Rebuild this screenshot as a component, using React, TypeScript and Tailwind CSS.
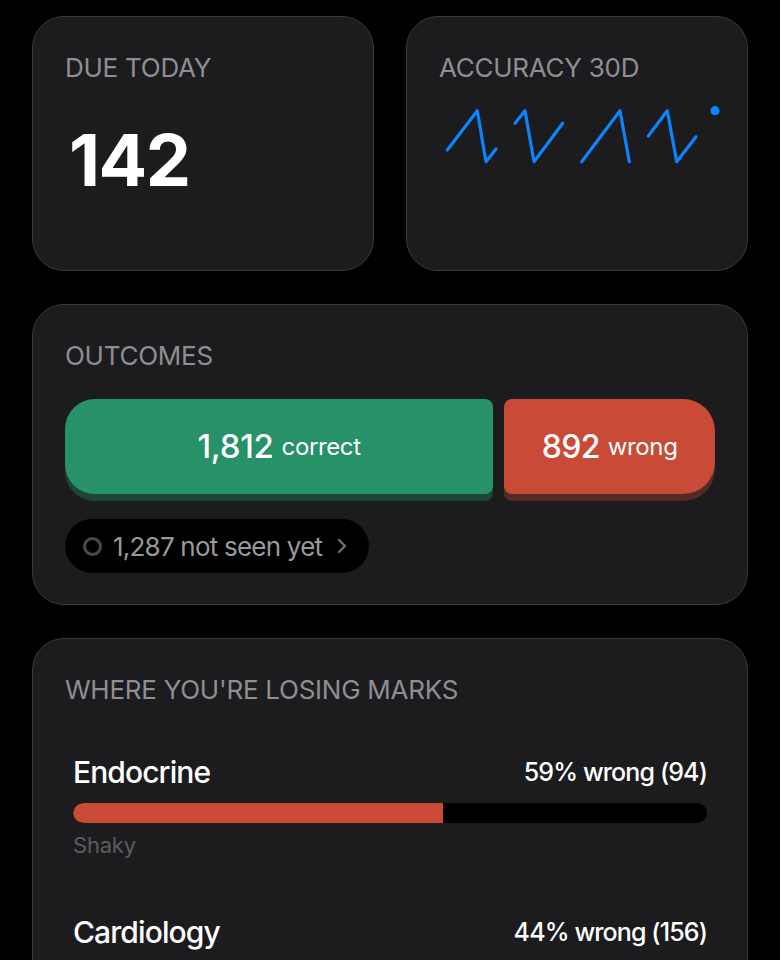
import React from "react";

const font = { fontFamily: "Inter, 'Liberation Sans', sans-serif" };

function Sparkline() {
  return (
    <svg width="282" height="64" viewBox="0 0 282 64" fill="none">
      <g stroke="#0a84ff" strokeWidth="3.2" strokeLinecap="round" strokeLinejoin="round">
        <polyline points="8.3,46 38.3,6.7 47,57.7 57,45" />
        <polyline points="76,19.3 86,6.7 95,57.7 123.7,19.3" />
        <polyline points="142.7,57.7 181,6.7 190.3,57.7" />
        <polyline points="209.3,32 228.3,6.7 237.7,57.7 257,32.7" />
      </g>
      <circle cx="276" cy="6.7" r="4.6" fill="#0a84ff" />
    </svg>
  );
}

function Row({ name, stat, pct, tag }: { name: string; stat: string; pct: number; tag?: string }) {
  return (
    <div className="px-2">
      <div className="flex items-center justify-between">
        <span className="text-[30px] leading-[40px] font-medium text-white tracking-[-0.03em]">{name}</span>
        <span className="text-[25px] leading-[40px] font-medium text-white tracking-[-0.035em]">{stat}</span>
      </div>
      <div className="mt-[11px] h-5 w-full rounded-full bg-black overflow-hidden">
        <div className="h-full bg-[#c84a37] rounded-l-full" style={{ width: `${pct}%` }} />
      </div>
      {tag && <div className="mt-2 text-[22px] leading-[28px] text-[#5c5c60] tracking-[-0.01em]">{tag}</div>}
    </div>
  );
}

export default function App() {
  return (
    <div className="h-[960px] overflow-hidden bg-black px-8 pt-4" style={font}>
      <div className="grid grid-cols-2 gap-8">
        <div className="h-[255px] rounded-[32px] border border-[#3a3a3c] bg-[#1c1c1e] px-8 pt-[31px]">
          <div className="text-[26px] leading-[40px] text-[#8e8e93] tracking-[-0.01em]">DUE TODAY</div>
          <div className="mt-8 text-[72px] leading-[80px] font-bold text-white tracking-[-0.02em] pl-1">142</div>
        </div>
        <div className="h-[255px] rounded-[32px] border border-[#3a3a3c] bg-[#1c1c1e] px-8 pt-[31px]">
          <div className="text-[26px] leading-[40px] text-[#8e8e93] tracking-[-0.01em]">ACCURACY 30D</div>
          <div className="mt-4">
            <Sparkline />
          </div>
        </div>
      </div>

      <div className="mt-[33px] rounded-[32px] border border-[#3a3a3c] bg-[#1c1c1e] px-8 pt-[31px] pb-[31px]">
        <div className="text-[26px] leading-[40px] text-[#8e8e93] tracking-[-0.01em]">OUTCOMES</div>
        <div className="mt-[23px] flex gap-[11px]">
          <div className="flex-[1812] h-[95px] rounded-l-[30px] rounded-r-[8px] bg-[#279168] shadow-[0_7px_0_#1d4636] flex items-center justify-center gap-2 text-white">
            <span className="text-[33px] font-medium tracking-[-0.01em]">1,812</span>
            <span className="text-[24px] tracking-[-0.015em]">correct</span>
          </div>
          <div className="flex-[892] h-[95px] rounded-l-[8px] rounded-r-[32px] bg-[#c84a37] shadow-[0_7px_0_#532b26] flex items-center justify-center gap-2 text-white">
            <span className="text-[32px] font-medium tracking-[-0.02em]">892</span>
            <span className="text-[24px] tracking-[-0.015em]">wrong</span>
          </div>
        </div>
        <div className="mt-[25px] flex">
          <div className="h-[54px] rounded-full bg-black pl-[18px] pr-[22px] flex items-center gap-[11px]">
            <span className="h-[19px] w-[19px] rounded-full border-[3px] border-[#4a4a4d]" />
            <span className="text-[26px] text-[#98989d] tracking-[-0.03em]">1,287 not seen yet</span>
            <svg width="10" height="16" viewBox="0 0 10 16" className="ml-1">
              <path d="M2 2 L8 8 L2 14" stroke="#6e6e73" strokeWidth="2.4" fill="none" strokeLinecap="round" strokeLinejoin="round" />
            </svg>
          </div>
        </div>
      </div>

      <div className="mt-[33px] rounded-[32px] border border-[#3a3a3c] bg-[#1c1c1e] px-8 pt-[31px] pb-8">
        <div className="text-[26px] leading-[40px] text-[#8e8e93] tracking-[-0.01em]">WHERE YOU'RE LOSING MARKS</div>
        <div className="mt-[42px] flex flex-col gap-[53px]">
          <Row name="Endocrine" stat="59% wrong (94)" pct={58.4} tag="Shaky" />
          <Row name="Cardiology" stat="44% wrong (156)" pct={44} />
        </div>
      </div>
    </div>
  );
}
